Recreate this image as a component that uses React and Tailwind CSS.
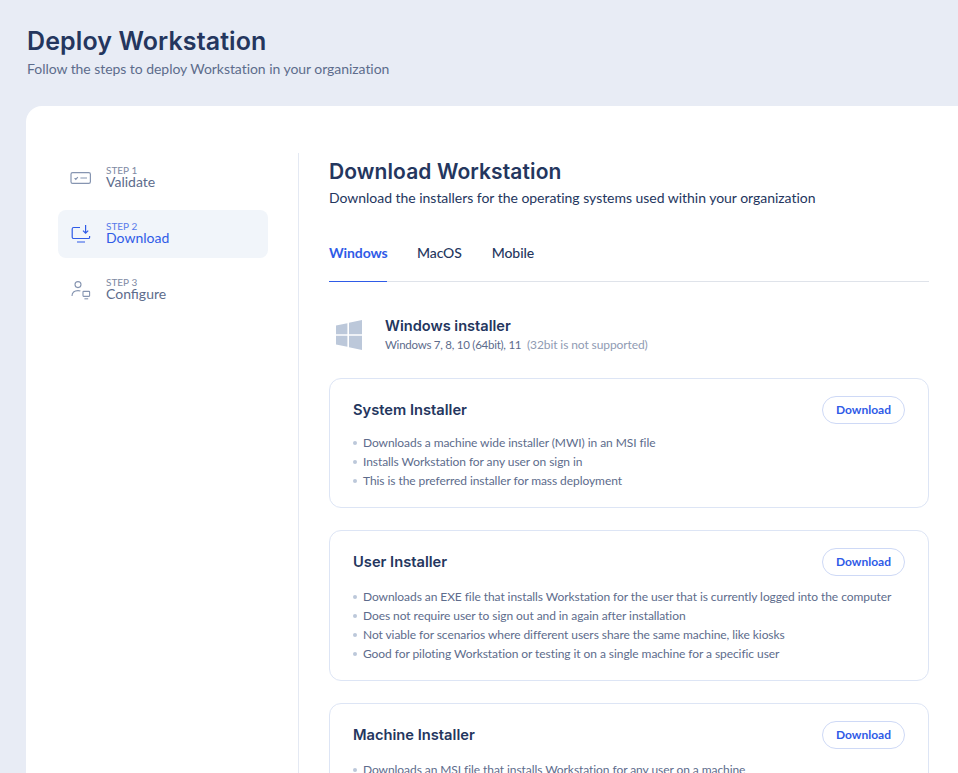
import React from 'react';

const heading = "font-['Inter','Liberation_Sans',sans-serif]";

const ValidateIcon = () => (
    <svg width="22" height="14" viewBox="0 0 22 14" fill="none" stroke="currentColor" strokeWidth="1.2">
        <rect x="1" y="1.6" width="19.4" height="10.8" rx="1.6" />
        <path d="M4.6 7.2l1.2 1.2 2-2.2M10.4 7h6.6" />
    </svg>
);

const DownloadIcon = () => (
    <svg width="20" height="20" viewBox="0 0 20 20" fill="none" stroke="currentColor" strokeWidth="1.2">
        <path d="M9 3.5H2.6a1.4 1.4 0 0 0-1.4 1.4v8.2a1.4 1.4 0 0 0 1.4 1.4h15a1 1 0 0 0 1-1v-1.4M14.6 1v8M12 6.6l2.6 2.6 2.6-2.6M6 18h8" />
    </svg>
);

const ConfigureIcon = () => (
    <svg width="20" height="21" viewBox="0 0 20 21" fill="none" stroke="currentColor" strokeWidth="1.1">
        <circle cx="7" cy="4.6" r="3" />
        <path d="M1 16c0-3.4 2.2-5.4 6-5.4 1 0 1.7.1 2.4.4" />
        <rect x="12" y="11.4" width="6.6" height="5" rx=".6" />
        <path d="M13.4 18.8h3.8" />
    </svg>
);

const WindowsIcon = () => (
    <svg width="26" height="30" viewBox="0 0 26 30" fill="#bcc8da">
        <path d="M0 5.6l11.4-2.4v11H0zM13 2.8L26 0v14.2H13zM0 15.8h11.4v11L0 24.4zM13 15.8h13V30l-13-2.8z" />
    </svg>
);

const steps = [
    { label: 'STEP 1', name: 'Validate', icon: ValidateIcon },
    { label: 'STEP 2', name: 'Download', icon: DownloadIcon, active: true },
    { label: 'STEP 3', name: 'Configure', icon: ConfigureIcon },
];

const installers = [
    {
        title: 'System Installer',
        compact: true,
        items: [
            'Downloads a machine wide installer (MWI) in an MSI file',
            'Installs Workstation for any user on sign in',
            'This is the preferred installer for mass deployment',
        ],
    },
    {
        title: 'User Installer',
        items: [
            'Downloads an EXE file that installs Workstation for the user that is currently logged into the computer',
            'Does not require user to sign out and in again after installation',
            'Not viable for scenarios where different users share the same machine, like kiosks',
            'Good for piloting Workstation or testing it on a single machine for a specific user',
        ],
    },
    {
        title: 'Machine Installer',
        items: [
            'Downloads an MSI file that installs Workstation for any user on a machine',
            'Installs Workstation for all users on the machine',
        ],
    },
];

const App = () => {
    return (
        <div className="h-[773px] overflow-hidden bg-[#e8ecf5] font-['Lato','Liberation_Sans',sans-serif] text-[#24365e]">
            <div className="h-[106px] pl-[27px] pt-[25px]">
                <h1 className={`${heading} text-[25px] leading-[32px] font-semibold tracking-[0.1px] text-[#24365e]`}>Deploy Workstation</h1>
                <p className="mt-[2px] text-[14px] leading-[20px] tracking-[-0.05px] text-[#5d6c8c]">Follow the steps to deploy Workstation in your organization</p>
            </div>

            <div className="ml-[26px] h-[700px] rounded-tl-2xl bg-white pt-[47px] flex">
                <div className="w-[273px] shrink-0 border-r border-[#e4e9f3] pl-[32px] pr-[30px] pt-[1px] flex flex-col gap-[8px]">
                    {steps.map((step) => {
                        const Icon = step.icon;
                        return (
                            <div key={step.name} className={`h-[48px] rounded-lg flex items-center pl-[12px] ${step.active ? 'bg-[#f1f5fa] text-[#2f5be7]' : 'text-[#5d6c8c]'}`}>
                                <div className={`w-[22px] flex justify-center ${step.active ? 'text-[#2f5be7]' : 'text-[#8695b1]'}`}><Icon /></div>
                                <div className="ml-[14px] pb-[2px]">
                                    <div className="text-[10px] leading-[10px] opacity-80">{step.label}</div>
                                    <div className="text-[14px] leading-[14px]">{step.name}</div>
                                </div>
                            </div>
                        );
                    })}
                </div>

                <div className="ml-[30px] w-[600px] shrink-0">
                    <h2 className={`${heading} h-[35px] text-[21px] leading-[37px] font-semibold tracking-[0.1px]`}>Download Workstation</h2>
                    <p className="text-[14px] leading-[20px] tracking-[-0.03px]">Download the installers for the operating systems used within your organization</p>

                    <div className="mt-[25px] flex gap-[30px] border-b border-[#dfe3ea] h-[49px] text-[14px] tracking-[-0.1px]">
                        <div className="h-[49px] w-[58px] border-b border-[#2f5be7] pt-[9px] font-bold text-[#2f5be7]">Windows</div>
                        <div className="pt-[9px] font-medium">MacOS</div>
                        <div className="pt-[9px] font-medium">Mobile</div>
                    </div>

                    <div className="mt-[28px] h-[50px] flex items-center pl-[7px]">
                        <WindowsIcon />
                        <div className="ml-[23px]">
                            <div className={`${heading} text-[14.6px] leading-[20px] font-semibold`}>Windows installer</div>
                            <div className="text-[11.5px] leading-[18px] tracking-[-0.25px] text-[#5d6c8c]">
                                Windows 7, 8, 10 (64bit), 11 <span className="ml-[3px] text-[12px] tracking-[-0.1px] text-[#8f9bb3]">(32bit is not supported)</span>
                            </div>
                        </div>
                    </div>

                    <div className="mt-[18px] flex flex-col gap-[22px]">
                        {installers.map((installer) => (
                            <div key={installer.title} className="rounded-xl border border-[#dde5f5] pl-[23px] pr-[23px] pt-[17px] pb-[17px]">
                                <div className="flex justify-between items-center h-[28px]">
                                    <h3 className={`${heading} text-[14.7px] font-semibold`}>{installer.title}</h3>
                                    <button className="h-[28px] w-[83px] rounded-full border border-[#ced9f6] text-[12px] font-bold text-[#2f5be7]">Download</button>
                                </div>
                                <ul className={installer.compact ? 'mt-[9px]' : 'mt-[11px]'}>
                                    {installer.items.map((item) => (
                                        <li key={item} className="flex items-center h-[19px] text-[12px] tracking-[-0.07px] text-[#5d6c8c]">
                                            <span className="h-[4px] w-[4px] rounded-full bg-[#bcc8da] mr-[6px]"></span>
                                            {item}
                                        </li>
                                    ))}
                                </ul>
                            </div>
                        ))}
                    </div>
                </div>
            </div>
        </div>
    );
};

export default App;
